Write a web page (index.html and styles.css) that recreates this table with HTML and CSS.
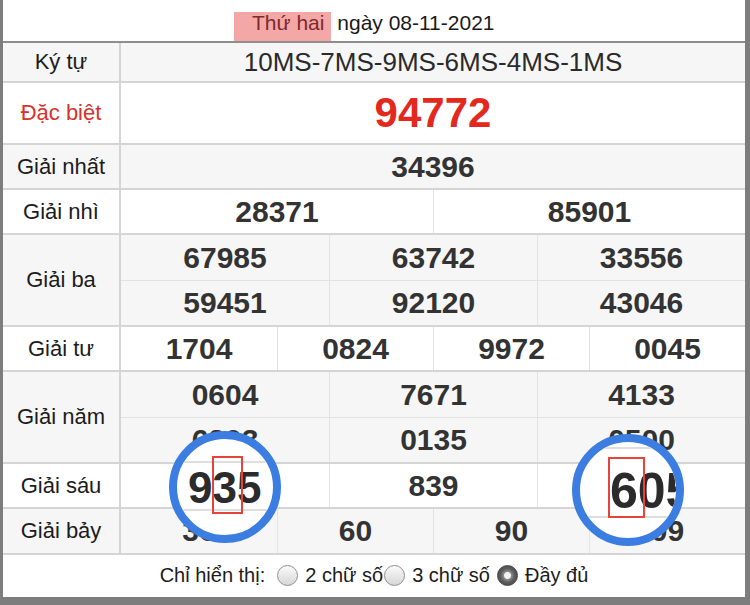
FILE: index.html
```html
<!DOCTYPE html>
<html lang="vi">
<head>
<meta charset="utf-8">
<title>Kết quả xổ số</title>
<link rel="stylesheet" href="styles.css">
</head>
<body>
<div class="frame">
  <div class="head"><span class="hl">Thứ hai</span> ngày 08-11-2021</div>
  <div class="tbl">
    <div class="row gray h38">
      <div class="lbl">Ký tự</div>
      <div class="cells n1"><div class="cell kt">10MS-7MS-9MS-6MS-4MS-1MS</div></div>
    </div>
    <div class="row h60">
      <div class="lbl red">Đặc biệt</div>
      <div class="cells n1"><div class="cell db">94772</div></div>
    </div>
    <div class="row gray h43">
      <div class="lbl">Giải nhất</div>
      <div class="cells n1"><div class="cell">34396</div></div>
    </div>
    <div class="row h43">
      <div class="lbl">Giải nhì</div>
      <div class="cells n2"><div class="cell">28371</div><div class="cell">85901</div></div>
    </div>
    <div class="row gray">
      <div class="lbl">Giải ba</div>
      <div class="cells n3">
        <div class="cell r1">67985</div><div class="cell r1">63742</div><div class="cell r1">33556</div>
        <div class="cell r2">59451</div><div class="cell r2">92120</div><div class="cell r2">43046</div>
      </div>
    </div>
    <div class="row h43">
      <div class="lbl">Giải tư</div>
      <div class="cells n4"><div class="cell">1704</div><div class="cell">0824</div><div class="cell">9972</div><div class="cell">0045</div></div>
    </div>
    <div class="row gray">
      <div class="lbl">Giải năm</div>
      <div class="cells n3">
        <div class="cell r1">0604</div><div class="cell r1">7671</div><div class="cell r1">4133</div>
        <div class="cell r2">6203</div><div class="cell r2">0135</div><div class="cell r2">0500</div>
      </div>
    </div>
    <div class="row h43">
      <div class="lbl">Giải sáu</div>
      <div class="cells n3"><div class="cell"><span class="covered">935</span></div><div class="cell">839</div><div class="cell"><span class="covered">605</span></div></div>
    </div>
    <div class="row gray h44">
      <div class="lbl">Giải bảy</div>
      <div class="cells n4"><div class="cell">36</div><div class="cell">60</div><div class="cell">90</div><div class="cell">09</div></div>
    </div>
  </div>
  <div class="foot">
    <span class="ft">Chỉ hiển thị:</span>
    <span class="radio r-a"></span>
    <span class="ft t2">2 chữ số</span>
    <span class="radio r-b"></span>
    <span class="ft t2">3 chữ số</span>
    <span class="radio r-c on"></span>
    <span class="ft t2">Đầy đủ</span>
  </div>

  <div class="lens lens1">
    <div class="lline l1a"></div>
    <div class="lline l1b"></div>
    <div class="ltext lt1">935</div>
    <div class="mark m1"></div>
  </div>
  <div class="lens lens2">
    <div class="lline l2a"></div>
    <div class="lline l2b"></div>
    <div class="ltext lt2">605</div>
    <div class="mark m2"></div>
  </div>
</div>
</body>
</html>
```

FILE: styles.css
```css
* { box-sizing: border-box; }
html, body { margin: 0; padding: 0; background: #fff; }
body {
  font-family: "Liberation Sans", Arial, sans-serif;
  color: #1c1c1c;
}
.frame {
  position: relative;
  width: 750px;
  height: 605px;
  border-left: 3px solid #7d7d7d;
  border-right: 5px solid #7d7d7d;
  border-bottom: 8px solid #7d7d7d;
  overflow: hidden;
}
.head {
  height: 41px;
  padding-top: 12px;
  padding-left: 231px;
  display: flex;
  align-items: flex-start;
  font-size: 21px;
  line-height: 22px;
  white-space: pre;
  color: #1a1a1a;
}
.head .hl {
  display: inline-block;
  height: 29px;
  line-height: 22px;
  padding-left: 18px;
  padding-right: 7px;
  background: #f3a7a7;
  color: #7e2a2a;
}

.tbl { border-top: 2px solid #8e8e8e; }
.row {
  display: grid;
  grid-template-columns: 118px 1fr;
  border-bottom: 2px solid #d5d5d5;
  background: #fff;
}
.row.gray { background: #f6f6f6; }
.lbl {
  border-right: 2px solid #d5d5d5;
  display: flex;
  align-items: center;
  justify-content: center;
  font-size: 22px;
  color: #1c1c1c;
}
.lbl.red { color: #d8322b; }
.cells { display: grid; }
.n1 { grid-template-columns: 1fr; }
.n2 { grid-template-columns: repeat(2, 1fr); }
.n3 { grid-template-columns: repeat(3, 1fr); }
.n4 { grid-template-columns: repeat(4, 1fr); }
.cell {
  display: flex;
  align-items: center;
  justify-content: center;
  font-size: 30px;
  font-weight: bold;
  color: #333;
  border-left: 1px solid #e3e3e3;
}
.n1 .cell, .n2 .cell:nth-child(2n+1), .n3 .cell:nth-child(3n+1), .n4 .cell:nth-child(4n+1) { border-left: none; }
.h38 .cell { height: 38px; }
.h60 .cell { height: 60px; }
.h43 .cell { height: 43px; }
.h44 .cell { height: 44px; }
.cell.r1 { height: 45px; }
.cell.r2 { height: 45px; border-top: 1px solid #e3e3e3; }
.cell.kt { font-size: 26px; font-weight: normal; color: #2a2a2a; }
.cell.db { font-size: 42px; color: #e3281d; }
.covered { visibility: hidden; }

.foot {
  height: 43px;
  display: flex;
  align-items: center;
  justify-content: center;
  font-size: 20px;
  color: #1c1c1c;
  padding-bottom: 2px;
}
.ft { white-space: nowrap; }
.ft.t2 { margin-left: 7px; }
.radio {
  width: 21px;
  height: 21px;
  border-radius: 50%;
  border: 1px solid #8f8f8f;
  background: linear-gradient(#fbfbfb, #d6d6d6);
}
.r-a { margin-left: 12px; }
.r-b { margin-left: 1px; }
.r-c { margin-left: 7px; }
.radio.on {
  border-color: #444;
  background: radial-gradient(circle, #f2f2f2 0 3px, #8a8a8a 4px, #5c5c5c 7px, #3e3e3e 100%);
}

.lens {
  position: absolute;
  width: 112px;
  height: 112px;
  border-radius: 50%;
  border: 8px solid #3b7de0;
  background: #fff;
  overflow: hidden;
}
.lens1 { left: 166px; top: 431px; }
.lens2 { left: 569px; top: 434px; }
.lline {
  position: absolute;
  left: 0;
  right: 0;
  height: 2px;
  background: #dedede;
}
.l1a { top: 22px; }
.l1b { top: 70px; }
.l2a { top: 5px; }
.l2b { top: 74px; }
.ltext {
  position: absolute;
  font-weight: bold;
  color: #2b2b2b;
  line-height: 1;
  white-space: nowrap;
}
.lt1 { left: 11px; top: 27px; font-size: 44px; }
.lt2 { left: 30px; top: 24px; font-size: 50px; }
.mark {
  position: absolute;
  border: 2px solid #e6443a;
}
.m1 { left: 35px; top: 17px; width: 31px; height: 58px; }
.m2 { left: 28px; top: 15px; width: 37px; height: 61px; }
```
